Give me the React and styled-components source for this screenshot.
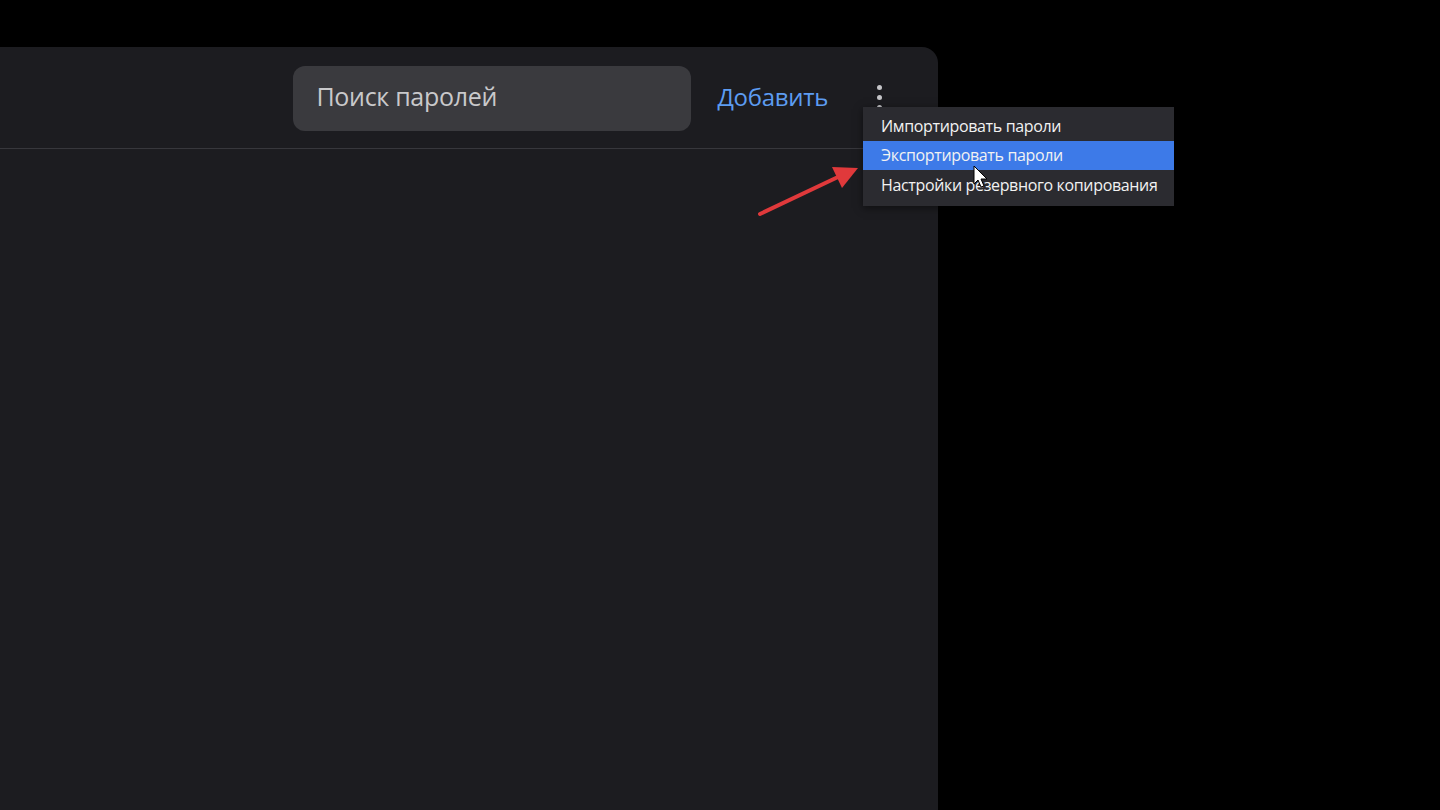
import styled, { createGlobalStyle } from 'styled-components'

const Global = createGlobalStyle`
  html, body {
    margin: 0;
    padding: 0;
    background: #000;
  }
  * { box-sizing: border-box; }
`

const Page = styled.div`
  position: relative;
  width: 1440px;
  height: 810px;
  overflow: hidden;
  background: #000;
  padding-top: 47px;
  font-family: "Open Sans", "Noto Sans", sans-serif;
`

const Panel = styled.main`
  width: 938px;
  height: 763px;
  background: #1c1c20;
  border-top-right-radius: 16px;
`

const Header = styled.header`
  display: flex;
  align-items: center;
  justify-content: flex-end;
  height: 102px;
  padding: 19px 54px 17px 0;
  border-bottom: 1px solid #37373c;
`

const Search = styled.div`
  width: 398px;
  height: 65px;
  border-radius: 12px;
  background: #3a3a3e;
  display: flex;
  align-items: center;
  padding: 0 0 5px 23px;
  color: #c9c9cb;
  font-size: 25px;
  letter-spacing: -0.3px;
`

const AddLink = styled.span`
  margin: 0 0 5px 26px;
  color: #5d9cf2;
  font-size: 24px;
  letter-spacing: -0.3px;
`

const Kebab = styled.div`
  margin-left: 46px;
  width: 10px;
  height: 40px;
  display: flex;
  flex-direction: column;
  align-items: center;
  gap: 5px;
  padding-top: 6px;

  span {
    width: 5px;
    height: 5px;
    border-radius: 50%;
    background: #c5c5c8;
  }
`

const Menu = styled.ul`
  position: absolute;
  left: 863px;
  top: 107px;
  width: 311px;
  margin: 0;
  padding: 4px 0 6px;
  list-style: none;
  background: #2b2b30;
  box-shadow: 0 2px 8px rgba(0, 0, 0, 0.5);
`

const MenuItem = styled.li`
  height: 29.5px;
  display: flex;
  align-items: center;
  padding-left: 18px;
  font-size: 16px;
  color: #f2f2f2;
  letter-spacing: -0.35px;
  background: ${({ active }) => (active ? '#3d7ae8' : 'transparent')};
`

const Overlay = styled.svg`
  position: absolute;
  left: 0;
  top: 0;
  pointer-events: none;
`

export default function App() {
  return (
    <Page>
      <Global />
      <Panel>
        <Header>
          <Search>Поиск паролей</Search>
          <AddLink>Добавить</AddLink>
          <Kebab>
            <span />
            <span />
            <span />
          </Kebab>
        </Header>
      </Panel>

      <Menu>
        <MenuItem>Импортировать пароли</MenuItem>
        <MenuItem active>Экспортировать пароли</MenuItem>
        <MenuItem>Настройки резервного копирования</MenuItem>
      </Menu>

      <Overlay width="1440" height="810">
        {/* red annotation arrow */}
        <line x1="760" y1="214" x2="838" y2="177" stroke="#e0393b" strokeWidth="4" strokeLinecap="round" />
        <polygon points="858,168 832,167 842,188" fill="#e0393b" />
        {/* mouse cursor */}
        <path
          d="M974 166 L974 184 L978 180 L981 187 L984 186 L981 179 L987 179 Z"
          fill="#fff"
          stroke="#000"
          strokeWidth="1"
          strokeLinejoin="round"
        />
      </Overlay>
    </Page>
  )
}
